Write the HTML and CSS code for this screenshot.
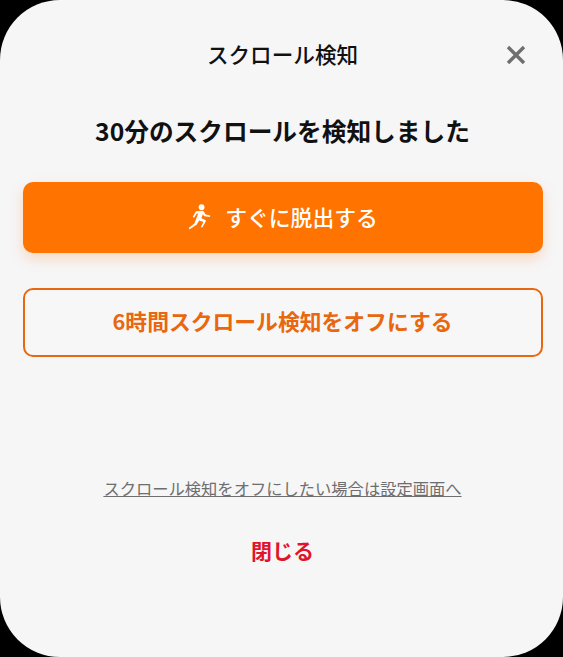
FILE: index.html
```html
<!DOCTYPE html>
<html lang="ja">
<head>
<meta charset="utf-8">
<title>スクロール検知</title>
<link rel="stylesheet" href="styles.css">
</head>
<body>
<main class="sheet">
  <header class="header">
    <h1 class="title">スクロール検知</h1>
    <button class="close" aria-label="閉じる">
      <svg viewBox="0 0 22 22" width="22" height="22"><path d="M3 3 L19 19 M19 3 L3 19" stroke="#6f6f6f" stroke-width="3.4" fill="none"/></svg>
    </button>
  </header>
  <h2 class="heading">30分のスクロールを検知しました</h2>
  <button class="btn primary">
    <svg class="runner" viewBox="0 0 24 26" width="24" height="26" fill="#fff">
      <circle cx="14.6" cy="3.2" r="2.9"/>
      <path d="M9.6 7.2 L15.2 6.8 C16 6.8 16.5 7.1 16.9 7.7 L18.6 10.6 L22.6 11.3 C23.6 11.5 23.4 13 22.3 12.9 L17.6 12.2 C17.2 12.1 16.9 11.9 16.7 11.6 L15.9 10.3 L14.4 14.2 L18.2 16 C19 16.4 19 17 18.6 17.7 L15.6 23 C15 24 13.6 23.2 14.2 22.2 L16.4 18 L12.2 16.4 L9.8 20.4 C9.5 20.9 9.2 21.1 8.7 21.2 L3.2 25 C2.2 25.6 1.3 24.2 2.3 23.5 L7.4 19.6 L11.2 9.6 L9.6 9.8 L7.4 13.2 C6.8 14.1 5.5 13.3 6 12.4 L8.4 8.2 C8.7 7.6 9 7.3 9.6 7.2 Z"/>
    </svg>
    <span>すぐに脱出する</span>
  </button>
  <button class="btn outline">6時間スクロール検知をオフにする</button>
  <a class="link" href="#">スクロール検知をオフにしたい場合は設定画面へ</a>
  <button class="dismiss">閉じる</button>
</main>
</body>
</html>
```
FILE: styles.css
```css
* { box-sizing: border-box; }
html, body { margin: 0; height: 100%; background: #000; }
body {
  font-family: "Noto Sans CJK JP", "Liberation Sans", sans-serif;
  overflow: hidden;
}
button { font-family: inherit; cursor: pointer; }
.sheet {
  height: 657px;
  background: #f6f6f7;
  border-radius: 60px;
  padding: 0 20.5px 0 22.5px;
  display: flex;
  flex-direction: column;
  align-items: stretch;
}
.header {
  height: 110px;
  flex: none;
  padding-top: 36px;
  position: relative;
}
.title {
  margin: 0;
  text-align: center;
  font-size: 21.6px;
  line-height: 36px;
  font-weight: 500;
  color: #111;
}
.close {
  position: absolute;
  top: 44px;
  right: 15.5px;
  width: 22px;
  height: 22px;
  padding: 0;
  border: 0;
  background: none;
  display: block;
}
.close svg { display: block; }
.heading {
  margin: 0 0 32px;
  text-align: center;
  font-size: 24.7px;
  line-height: 40px;
  font-weight: 700;
  color: #111;
}
.btn {
  display: flex;
  align-items: center;
  justify-content: center;
  width: 100%;
  border-radius: 10px;
  font-size: 21.5px;
  font-weight: 500;
}
.primary {
  height: 71px;
  gap: 14px;
  border: 0;
  background: #ff7300;
  color: #fff;
  font-size: 21.8px;
  box-shadow: 0 6px 14px rgba(255, 115, 0, 0.22);
  padding: 0 0 2px 0;
}
.runner { display: block; }
.outline {
  height: 69px;
  margin-top: 35px;
  border: 2px solid #e8670f;
  background: #f7f7f8;
  color: #e8670f;
  font-size: 21.8px;
  font-weight: 700;
  padding: 0 0 4px;
}
.link {
  margin-top: 118px;
  align-self: center;
  font-size: 16.3px;
  line-height: 26px;
  color: #6e6e6e;
  text-decoration: underline;
}
.dismiss {
  margin-top: 31px;
  align-self: center;
  padding: 0;
  border: 0;
  background: none;
  font-size: 21px;
  line-height: 36px;
  font-weight: 700;
  color: #e0142d;
}
```
